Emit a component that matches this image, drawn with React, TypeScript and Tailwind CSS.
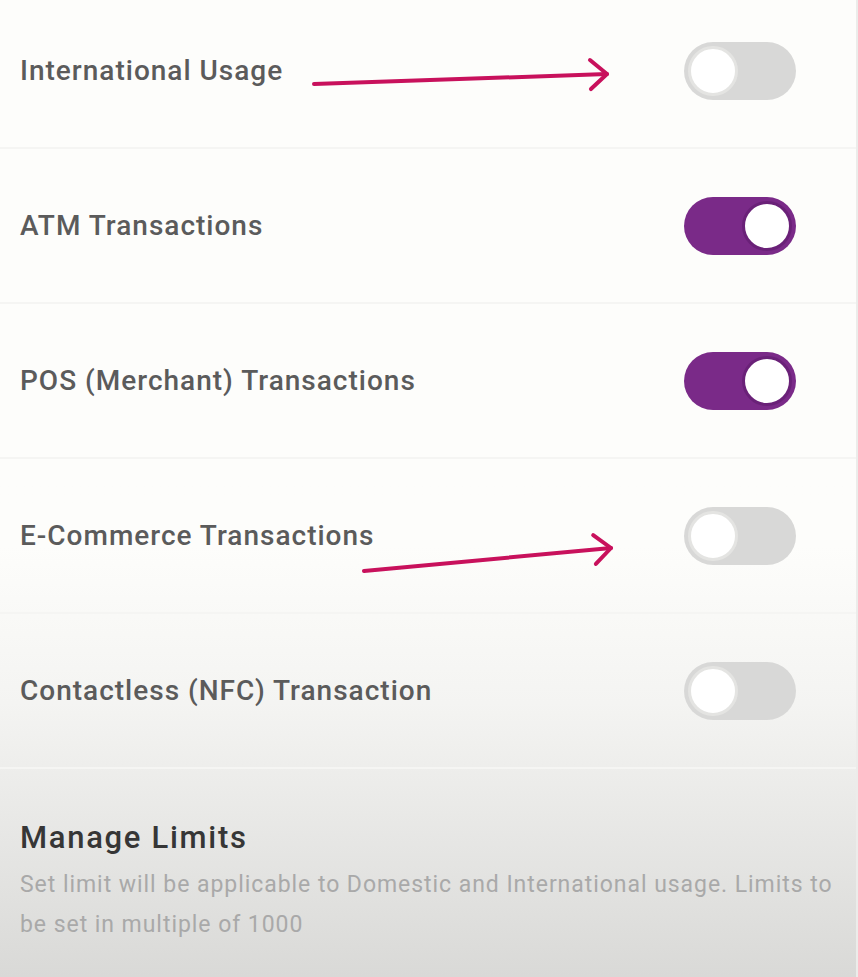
import React from 'react'

const rows = [
  { label: 'International Usage', on: false },
  { label: 'ATM Transactions', on: true },
  { label: 'POS (Merchant) Transactions', on: true },
  { label: 'E-Commerce Transactions', on: false },
  { label: 'Contactless (NFC) Transaction', on: false },
]

function Toggle({ on }: { on: boolean }) {
  return (
    <div
      className={`w-[112px] h-[58px] rounded-full flex items-center px-[4px] ${
        on ? 'bg-[#7a2a88] justify-end' : 'bg-[#d8d8d7] justify-start'
      }`}
    >
      <div
        className={`w-[50px] h-[50px] rounded-full bg-white ${
          on ? 'border-[3px] border-[#6a2178]' : 'border-[3px] border-[#e4e4e2]'
        }`}
      />
    </div>
  )
}

function Arrow({ x1, y1, x2, y2 }: { x1: number; y1: number; x2: number; y2: number }) {
  const ang = Math.atan2(y2 - y1, x2 - x1)
  const len = 22
  const a1 = ang + Math.PI - 0.72
  const a2 = ang + Math.PI + 0.72
  return (
    <g stroke="#c8115c" strokeWidth={4} strokeLinecap="round" strokeLinejoin="round" fill="none">
      <line x1={x1} y1={y1} x2={x2} y2={y2} />
      <polyline
        points={`${x2 + len * Math.cos(a1)},${y2 + len * Math.sin(a1)} ${x2},${y2} ${x2 + len * Math.cos(a2)},${y2 + len * Math.sin(a2)}`}
      />
    </g>
  )
}

export default function App() {
  return (
    <div
      className="relative w-[858px] h-[977px] overflow-hidden bg-linear-to-b from-[#fdfdfb] from-[56%] via-[#f4f4f2] via-[72%] to-[#d9d9d7] border-r-2 border-[#ececea]"
      style={{ fontFamily: 'Roboto, "Noto Sans", sans-serif' }}
    >
      <div className="-mt-[6px]">
        {rows.map((row, i) => (
          <div
            key={i}
            className="h-[155px] flex items-center justify-between pl-[20px] pr-[60px] border-b-2 border-[#f5f5f3]"
          >
            <span className="text-[28px] font-medium text-[#5b5b5b] tracking-[1px]">{row.label}</span>
            <Toggle on={row.on} />
          </div>
        ))}
      </div>

      {/* Manage Limits */}
      <div className="px-[20px] pt-[50px]">
        <h2 className="text-[31px] font-medium text-[#363636] leading-[38px] tracking-[1.7px]">Manage Limits</h2>
        <p className="mt-[8px] max-w-[840px] text-[23px] text-[#a9a9a9] leading-[40px] tracking-[0.95px]">
          Set limit will be applicable to Domestic and International usage. Limits to be set in multiple of 1000
        </p>
      </div>

      <svg className="absolute inset-0 pointer-events-none" width={858} height={977}>
        <Arrow x1={314} y1={84} x2={607} y2={74} />
        <Arrow x1={364} y1={571} x2={611} y2={548} />
      </svg>
    </div>
  )
}
